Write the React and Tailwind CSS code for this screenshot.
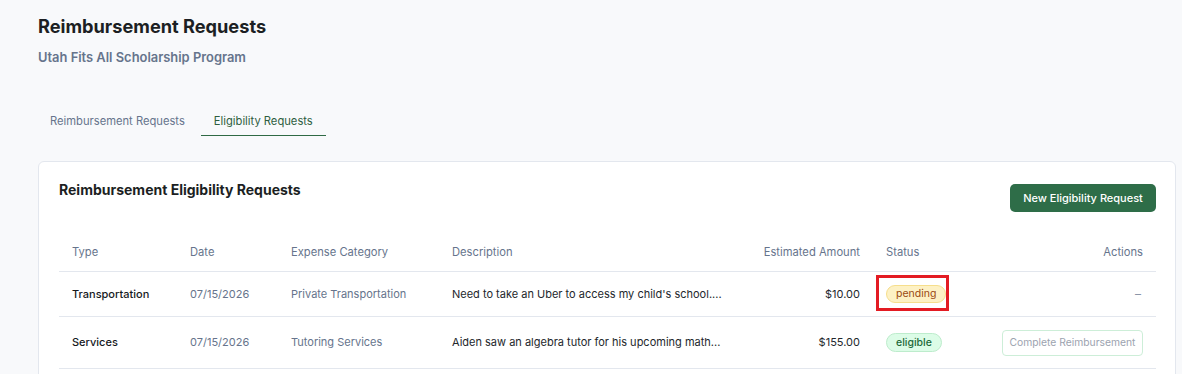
import React from "react";

const rows = [
  {
    type: "Transportation",
    date: "07/15/2026",
    category: "Private Transportation",
    description: "Need to take an Uber to access my child's school....",
    amount: "$10.00",
    status: "pending",
  },
  {
    type: "Services",
    date: "07/15/2026",
    category: "Tutoring Services",
    description: "Aiden saw an algebra tutor for his upcoming math...",
    amount: "$155.00",
    status: "eligible",
  },
];

export default function App() {
  return (
    <div
      className="min-h-[374px] w-full bg-[#f8f9fb] pl-[38px] pr-[6px] pt-[14px] text-[#1a1d21]"
      style={{ fontFamily: "Inter, 'Noto Sans', sans-serif" }}
    >
      <h1 className="text-[18.2px] font-bold leading-[24px] text-[#1c1f23]">
        Reimbursement Requests
      </h1>
      <p className="mt-[10px] text-[12.9px] font-semibold leading-[20px] text-[#66748c]">
        Utah Fits All Scholarship Program
      </p>

      <div className="mt-[39px] flex text-[11.2px] leading-[16px]">
        <div className="px-[12px] pb-[7px] pt-[6px] text-[#66748c]">Reimbursement Requests</div>
        <div className="ml-[4px] border-b-[1.5px] border-[#2f6a45] px-[13px] pb-[6px] pt-[6px] text-[#2f5e3f]">
          Eligibility Requests
        </div>
      </div>

      <div className="mt-[25px] rounded-[6px] border border-[#e3e7ee] bg-white pb-[24px] pl-[20px] pr-[19px] pt-[19px]">
        <div className="flex items-start justify-between">
          <h2 className="text-[14px] font-bold leading-[18px] text-[#1c1f23]">
            Reimbursement Eligibility Requests
          </h2>
          <button className="mt-[3px] flex h-[28px] w-[146px] items-center justify-center rounded-[5px] bg-[#2e6d48] text-[11px] font-medium text-white">
            New Eligibility Request
          </button>
        </div>

        <div className="mt-[22px] whitespace-nowrap text-[11px]">
          <div className="grid h-[38px] grid-cols-[118px_101px_161px_260px_148px_120px_1fr] items-center border-b border-[#e3e7ee] pl-[13px] pr-[13px] text-[11.2px] text-[#66748c]">
            <div>Type</div>
            <div>Date</div>
            <div>Expense Category</div>
            <div>Description</div>
            <div className="text-right">Estimated Amount</div>
            <div className="pl-[26px]">Status</div>
            <div className="text-right">Actions</div>
          </div>
          {rows.map((r, i) => (
            <div
              key={i}
              className={`grid grid-cols-[118px_101px_161px_260px_148px_120px_1fr] items-center border-b border-[#e3e7ee] pl-[13px] pr-[13px] ${
                i === 0 ? "h-[45px]" : "h-[52px]"
              }`}
            >
              <div className="font-medium text-[#16191d]">{r.type}</div>
              <div className="text-[#66748c]">{r.date}</div>
              <div className="text-[#66748c]">{r.category}</div>
              <div className="text-[#23272c]">{r.description}</div>
              <div className="text-right text-[#23272c]">{r.amount}</div>
              <div className="pl-[26px]">
                {r.status === "pending" ? (
                  <span className="relative inline-flex h-[18px] items-center rounded-full border border-[#f6de8c] bg-[#fdf1c4] px-[9px] text-[10.5px] text-[#9a4a12]">
                    pending
                    <span className="pointer-events-none absolute left-[-11px] top-[-11px] h-[36px] w-[73px] border-[3px] border-[#e31b23]" />
                  </span>
                ) : (
                  <span className="inline-flex h-[19px] items-center rounded-full border border-[#bdeccc] bg-[#dcfce7] px-[9px] text-[10.5px] font-medium text-[#1e6a3a]">
                    eligible
                  </span>
                )}
              </div>
              <div className="flex justify-end">
                {r.status === "pending" ? (
                  <span className="pr-[2px] text-[12px] text-[#8b96a8]">–</span>
                ) : (
                  <button className="h-[26px] w-[141px] rounded-[4px] border border-[#cdeed8] bg-white text-[10.3px] text-[#9ca3af]">
                    Complete Reimbursement
                  </button>
                )}
              </div>
            </div>
          ))}
        </div>
      </div>
    </div>
  );
}
